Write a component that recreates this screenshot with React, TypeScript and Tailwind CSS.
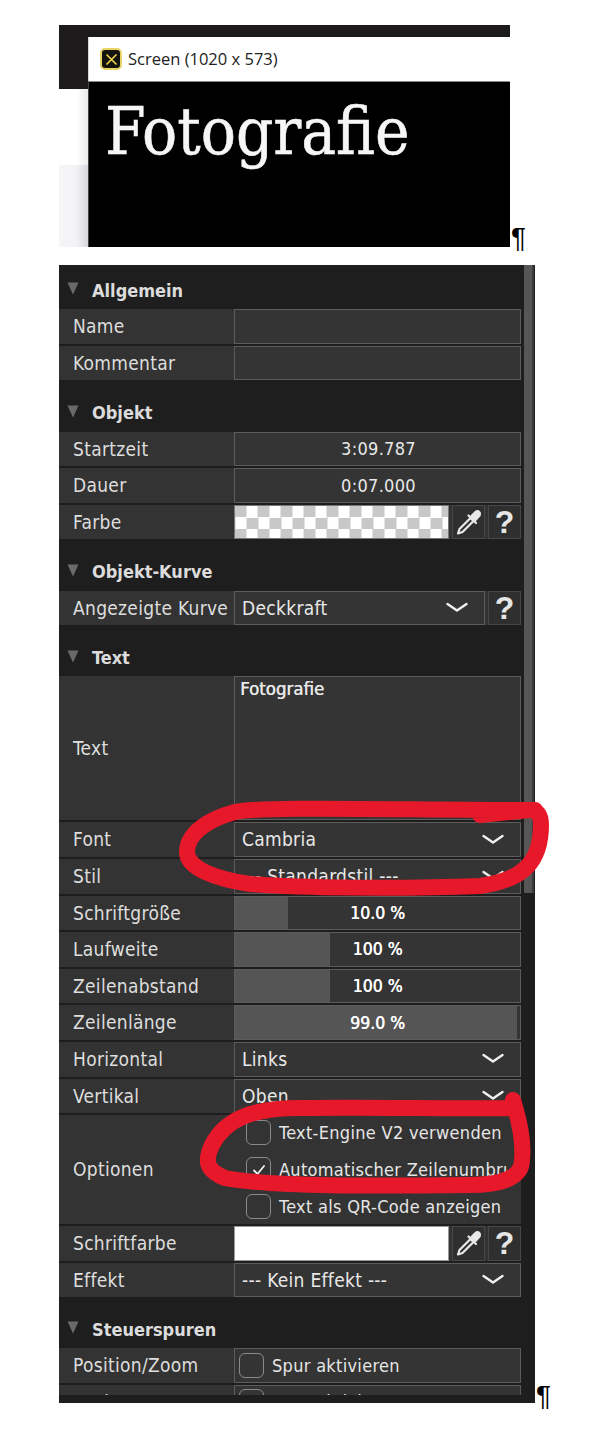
const FONT = "font-['DejaVu_Sans_Condensed','DejaVu_Sans',sans-serif]";

function Dropper() {
  return (
    <svg width="28" height="28" viewBox="0 0 28 28" fill="none" stroke="#e8e8e8" strokeWidth="2.2" strokeLinejoin="round" strokeLinecap="round">
      <path d="M15.5 10 L4.5 21 L3 25.5 L7.5 24 L18.5 13 Z" />
      <path d="M13.5 7.5 L21 15" />
      <path d="M16.5 8 L21 3.5 Q22.8 2.5 24.3 4 Q25.8 5.5 24.8 7.2 L20.5 12 Z" fill="#e8e8e8" />
    </svg>
  );
}

function Chevron() {
  return (
    <svg width="24" height="12" viewBox="0 0 24 12" fill="none" stroke="#f0f0f0" strokeWidth="2.4" strokeLinecap="round" strokeLinejoin="round">
      <path d="M2.5 2 L12 8.5 L21.5 2" />
    </svg>
  );
}

function Header({ title }: { title: string }) {
  return (
    <div className="h-[34.6px] flex items-center shrink-0">
      <svg width="12" height="13" viewBox="0 0 12 13" className="ml-[8px] mr-[13px] mb-[2px]">
        <path d="M0.5 0.5 H11.5 L6 12.5 Z" fill="#6a6a6a" />
      </svg>
      <span className="text-[18px] font-bold text-[#dcdcdc] leading-none pt-[2px]">{title}</span>
    </div>
  );
}

function Row({ label, h = "h-[34.6px]", children }: { label: string; h?: string; children?: React.ReactNode }) {
  return (
    <div className={`flex ${h} shrink-0 bg-[#333333]`}>
      <div className="w-[175px] shrink-0 flex items-center pl-[14px] text-[19px] tracking-[0.3px] text-[#dedede] whitespace-nowrap">{label}</div>
      <div className="flex-1 min-w-0 flex gap-[3px]">{children}</div>
    </div>
  );
}

function Box({ children, className = "" }: { children?: React.ReactNode; className?: string }) {
  return <div className={`border border-[#5c5c5c] bg-[#343434] text-[#e8e8e8] text-[19px] tracking-[0.3px] h-full ${className}`}>{children}</div>;
}

function Centered({ text }: { text: string }) {
  return <Box className="flex-1 flex items-center justify-center pl-[2px]"><span className="text-[18px]">{text}</span></Box>;
}

function Select({ text }: { text: string }) {
  return (
    <Box className="flex-1 flex items-center justify-between pl-[7px] pr-[15px]">
      <span>{text}</span>
      <Chevron />
    </Box>
  );
}

function Slider({ text, pct }: { text: string; pct: number }) {
  return (
    <Box className="flex-1 relative flex items-center justify-center bg-[#2b2b2b]">
      <div className="absolute left-0 top-0 bottom-0 bg-[#555555]" style={{ width: `${pct}%` }} />
      <span className="relative text-white text-[17.5px] tracking-normal [text-shadow:0.4px_0_0_#ffffff]">{text}</span>
    </Box>
  );
}

function IconBtn({ children }: { children: React.ReactNode }) {
  return (
    <div className="w-[33px] h-full shrink-0 border border-[#484848] bg-[#2f2f2f] flex items-center justify-center">{children}</div>
  );
}

function Question() {
  return <span className="text-[32px] font-bold text-[#e6e6e6] leading-none font-['Liberation_Sans',sans-serif]">?</span>;
}

function Check({ text, checked }: { text: string; checked?: boolean }) {
  return (
    <div className="flex items-center gap-[8px] text-[18px] tracking-[0.3px] text-[#e6e6e6] whitespace-nowrap">
      <div className="w-[25px] h-[25px] rounded-[6px] border-[1.5px] border-[#8a8a8a] shrink-0 flex items-center justify-center">
        {checked && (
          <svg width="14" height="12" viewBox="0 0 14 12" fill="none" stroke="#f0f0f0" strokeWidth="1.8" strokeLinecap="round" strokeLinejoin="round">
            <path d="M2 6.5 L5.5 10 L12 2" />
          </svg>
        )}
      </div>
      <span>{text}</span>
    </div>
  );
}

function Section({ mt = "", children }: { mt?: string; children: React.ReactNode }) {
  return <div className={`flex flex-col gap-[2px] ${mt}`}>{children}</div>;
}

export default function App() {
  return (
    <div className="w-[590px] h-[1441px] bg-white pt-[25px] pl-[59px] overflow-hidden">
      <div className="flex items-end h-[222px]">
        <div className="w-[451px] h-[222px] flex overflow-hidden">
          <div className="w-[29px] shrink-0 flex flex-col">
            <div className="h-[64px] bg-[#1c1a1a]" />
            <div className="h-[76px] bg-gradient-to-r from-white via-white via-60% to-[#ececec]" />
            <div className="flex-1 bg-gradient-to-r from-[#f6f6f8] via-[#f3f3f6] via-60% to-[#d6d6dc]" />
          </div>
          <div className="flex-1 flex flex-col">
            <div className="h-[12px] bg-[#1c1a1a] shrink-0" />
            <div className="h-[44px] bg-white flex items-center shrink-0 pl-[11px] gap-[6px] border-l border-[#d8d8d8]">
              <div className="w-[22px] h-[22px] rounded-[5px] bg-[#14140c] border-2 border-[#e9d468] flex items-center justify-center">
                <svg width="13" height="13" viewBox="0 0 13 13" fill="none" stroke="#f0d54a" strokeWidth="1.6">
                  <path d="M1.5 1.5 L11.5 11.5 M11.5 1.5 L1.5 11.5" />
                </svg>
              </div>
              <span className="font-['Open_Sans',sans-serif] text-[16.5px] text-[#222222]">Screen (1020 x 573)</span>
            </div>
            <div className="flex-1 bg-black border-t border-[#8a8a8a] border-l border-l-[#444444] pl-[16px] pt-[8px]">
              <div className="font-['DejaVu_Serif_Condensed','DejaVu_Serif',serif] text-[65px] leading-[84px] text-[#f6f6f6] [-webkit-text-stroke:0.5px_#f6f6f6]">Fotografie</div>
            </div>
          </div>
        </div>
        <span className="font-['Liberation_Sans',sans-serif] text-[28px] leading-none text-black ml-[1px] mb-[-5px]">¶</span>
      </div>

      <div className="flex items-end mt-[18px]">
        <div className={`relative w-[476px] h-[1138px] bg-[#1e1e1e] flex ${FONT}`}>
          <div className="w-[462px] h-[1130px] overflow-hidden pt-[7.7px] shrink-0">
            <Section>
              <Header title="Allgemein" />
              <Row label="Name"><Box className="flex-1" /></Row>
              <Row label="Kommentar"><Box className="flex-1" /></Row>
            </Section>
            <Section mt="mt-[14.6px]">
              <Header title="Objekt" />
              <Row label="Startzeit"><Centered text="3:09.787" /></Row>
              <Row label="Dauer"><Centered text="0:07.000" /></Row>
              <Row label="Farbe">
                <div className="flex-1 h-full border border-[#777777] bg-white bg-[repeating-conic-gradient(#c8c8c8_0%_25%,#ffffff_0%_50%)] bg-[length:23px_23px] bg-[position:11.5px_0]" />
                <IconBtn><Dropper /></IconBtn>
                <IconBtn><Question /></IconBtn>
              </Row>
            </Section>
            <Section mt="mt-[14.6px]">
              <Header title="Objekt-Kurve" />
              <Row label="Angezeigte Kurve">
                <Select text="Deckkraft" />
                <IconBtn><Question /></IconBtn>
              </Row>
            </Section>
            <Section mt="mt-[14.6px]">
              <Header title="Text" />
              <Row label="Text" h="h-[144px]">
                <Box className="flex-1 pl-[5px]">
                  <div className="text-[18.5px] tracking-normal leading-[24px] [text-shadow:0.4px_0_0_#e8e8e8]">Fotografie</div>
                </Box>
              </Row>
              <Row label="Font"><Select text="Cambria" /></Row>
              <Row label="Stil"><Select text="--- Standardstil ---" /></Row>
              <Row label="Schriftgröße"><Slider text="10.0 %" pct={18.5} /></Row>
              <Row label="Laufweite"><Slider text="100 %" pct={33.5} /></Row>
              <Row label="Zeilenabstand"><Slider text="100 %" pct={33.5} /></Row>
              <Row label="Zeilenlänge"><Slider text="99.0 %" pct={99} /></Row>
              <Row label="Horizontal"><Select text="Links" /></Row>
              <Row label="Vertikal"><Select text="Oben" /></Row>
              <Row label="Optionen" h="h-[109px]">
                <div className="flex-1 min-w-0 overflow-hidden flex flex-col justify-between pl-[12px] mr-[13px] py-[4px]">
                  <Check text="Text-Engine V2 verwenden" />
                  <Check text="Automatischer Zeilenumbruch" checked />
                  <Check text="Text als QR-Code anzeigen" />
                </div>
              </Row>
              <Row label="Schriftfarbe">
                <div className="flex-1 h-full border border-[#999999] bg-white" />
                <IconBtn><Dropper /></IconBtn>
                <IconBtn><Question /></IconBtn>
              </Row>
              <Row label="Effekt"><Select text="--- Kein Effekt ---" /></Row>
            </Section>
            <Section mt="mt-[14px]">
              <Header title="Steuerspuren" />
              <Row label="Position/Zoom">
                <Box className="flex-1 flex items-center pl-[4px]"><Check text="Spur aktivieren" /></Box>
              </Row>
              <Row label="Drehung">
                <Box className="flex-1 flex items-center pl-[4px]"><Check text="Spur aktivieren" /></Box>
              </Row>
            </Section>
          </div>
          <div className="ml-[3px] w-[10px] h-[628px] bg-[#565656] border-r-2 border-[#3c3c3c] shrink-0" />

          <svg className="absolute left-0 top-0 pointer-events-none" width="500" height="1000" viewBox="59 265 500 1000" fill="none" stroke="#e7182a" strokeWidth="16" strokeLinecap="round" strokeLinejoin="round">
            <path d="M480 815 L530 810 Q541 810 541 825 C541 860 525 880 480 886 C400 889 300 888 250 884 C215 879 187 868 187 852 C187 835 205 820 235 812 C260 806 400 810 535 810" />
            <path d="M513 1100 C519 1120 524 1140 522 1160 C522 1176 505 1185 470 1185 C380 1186 270 1187 225 1178 C205 1170 205 1160 212 1145 C225 1120 250 1108 300 1108 C380 1107 450 1109 510 1108" />
          </svg>
        </div>
        <span className="font-['Liberation_Sans',sans-serif] text-[28px] leading-none text-black ml-[1px] mb-[-7px]">¶</span>
      </div>
    </div>
  );
}
